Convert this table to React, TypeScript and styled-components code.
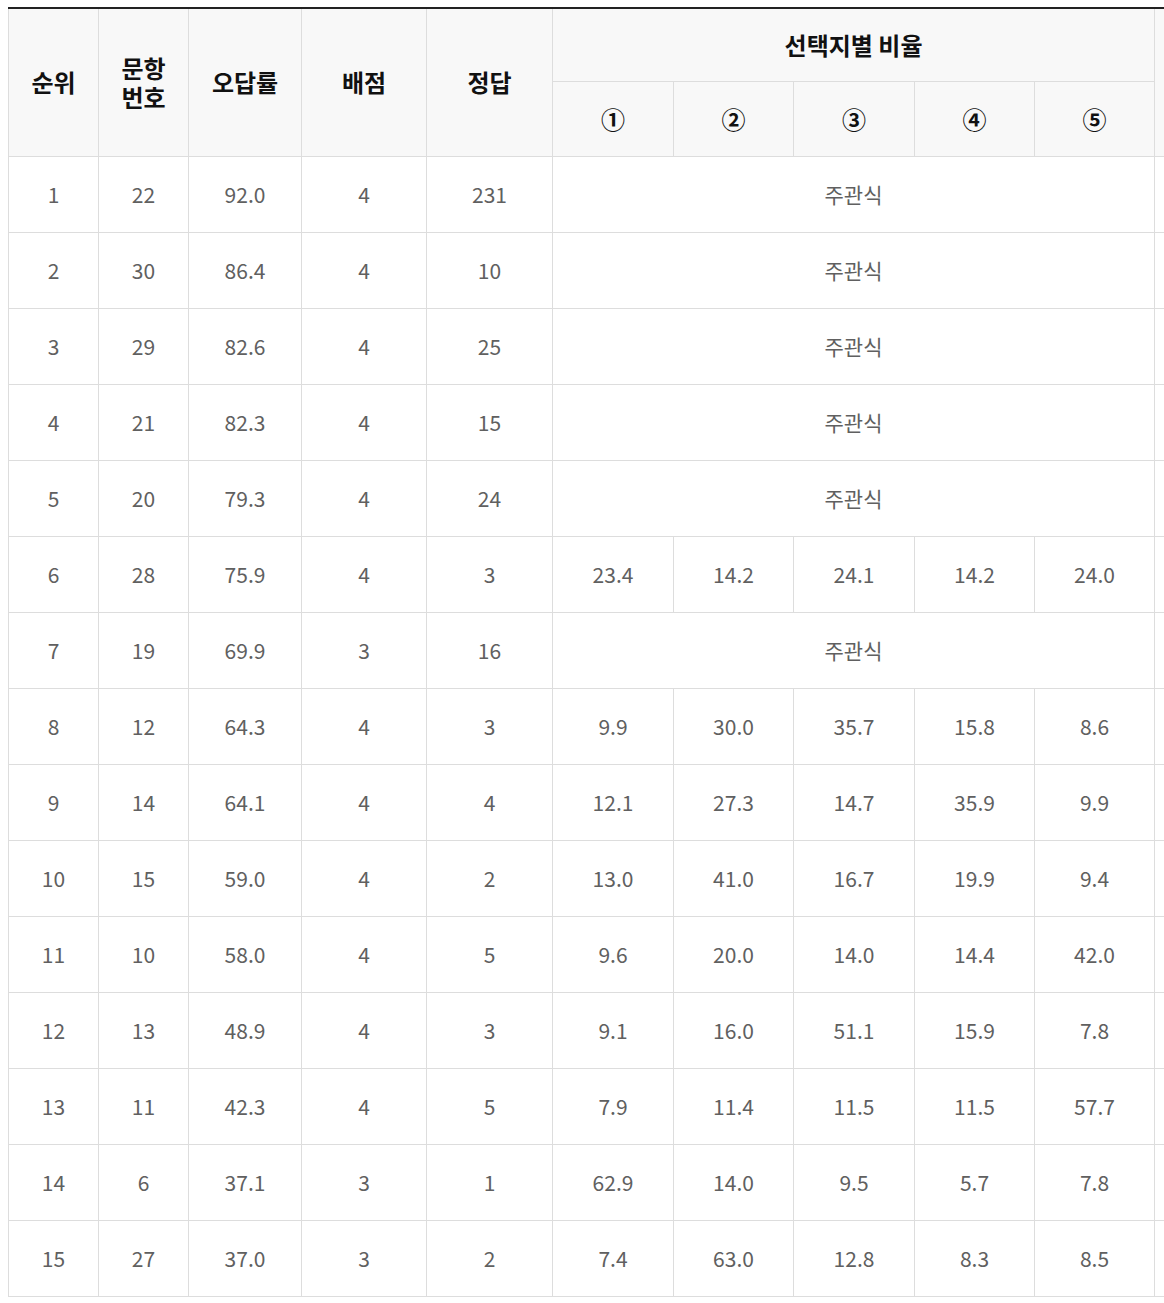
import React from "react";
import styled, { createGlobalStyle } from "styled-components";

const Global = createGlobalStyle`
  html, body { margin: 0; padding: 0; background: #fff; }
  body { font-family: "Noto Sans CJK KR", "Noto Sans", sans-serif; }
`;

const Page = styled.div`
  box-sizing: border-box;
  width: 100%;
  padding: 7px 0 0 8px;
  overflow: hidden;
`;

const Table = styled.table`
  border-collapse: collapse;
  table-layout: fixed;
  width: 1266px;
  border-top: 2px solid #222;
`;

const HeadCell = styled.th<{ $h?: number }>`
  background: #f8f8f8;
  border: 1px solid #ddd;
  border-top: none;
  color: #111;
  font-size: 24px;
  font-weight: 700;
  line-height: 29px;
  text-align: center;
  vertical-align: middle;
  padding: 0 0 2px;
  height: ${(p) => p.$h ?? 70}px;
`;

const Row = styled.tr`
  height: 76px;
`;

const Cell = styled.td`
  border: 1px solid #ddd;
  color: #606060;
  font-size: 21px;
  font-weight: 400;
  text-align: center;
  vertical-align: middle;
  padding: 0 0 2px;
`;

type R = { rank: number; no: number; rate: string; pt: number; ans: number; ratios?: string[] };

const rows: R[] = [
  { rank: 1, no: 22, rate: "92.0", pt: 4, ans: 231 },
  { rank: 2, no: 30, rate: "86.4", pt: 4, ans: 10 },
  { rank: 3, no: 29, rate: "82.6", pt: 4, ans: 25 },
  { rank: 4, no: 21, rate: "82.3", pt: 4, ans: 15 },
  { rank: 5, no: 20, rate: "79.3", pt: 4, ans: 24 },
  { rank: 6, no: 28, rate: "75.9", pt: 4, ans: 3, ratios: ["23.4", "14.2", "24.1", "14.2", "24.0"] },
  { rank: 7, no: 19, rate: "69.9", pt: 3, ans: 16 },
  { rank: 8, no: 12, rate: "64.3", pt: 4, ans: 3, ratios: ["9.9", "30.0", "35.7", "15.8", "8.6"] },
  { rank: 9, no: 14, rate: "64.1", pt: 4, ans: 4, ratios: ["12.1", "27.3", "14.7", "35.9", "9.9"] },
  { rank: 10, no: 15, rate: "59.0", pt: 4, ans: 2, ratios: ["13.0", "41.0", "16.7", "19.9", "9.4"] },
  { rank: 11, no: 10, rate: "58.0", pt: 4, ans: 5, ratios: ["9.6", "20.0", "14.0", "14.4", "42.0"] },
  { rank: 12, no: 13, rate: "48.9", pt: 4, ans: 3, ratios: ["9.1", "16.0", "51.1", "15.9", "7.8"] },
  { rank: 13, no: 11, rate: "42.3", pt: 4, ans: 5, ratios: ["7.9", "11.4", "11.5", "11.5", "57.7"] },
  { rank: 14, no: 6, rate: "37.1", pt: 3, ans: 1, ratios: ["62.9", "14.0", "9.5", "5.7", "7.8"] },
  { rank: 15, no: 27, rate: "37.0", pt: 3, ans: 2, ratios: ["7.4", "63.0", "12.8", "8.3", "8.5"] },
];

const widths = [90, 90, 113, 125, 126, 121, 120, 121, 120, 120, 120];
const circled = ["①", "②", "③", "④", "⑤"];

export default function App() {
  return (
    <Page>
      <Global />
      <Table>
        <colgroup>
          {widths.map((w, i) => (
            <col key={i} style={{ width: w }} />
          ))}
        </colgroup>
        <thead>
          <tr>
            <HeadCell rowSpan={2}>순위</HeadCell>
            <HeadCell rowSpan={2}>
              문항
              <br />
              번호
            </HeadCell>
            <HeadCell rowSpan={2}>오답률</HeadCell>
            <HeadCell rowSpan={2}>배점</HeadCell>
            <HeadCell rowSpan={2}>정답</HeadCell>
            <HeadCell colSpan={5}>선택지별 비율</HeadCell>
            <HeadCell rowSpan={2} />
          </tr>
          <tr>
            {circled.map((c) => (
              <HeadCell key={c} $h={72}>
                {c}
              </HeadCell>
            ))}
          </tr>
        </thead>
        <tbody>
          {rows.map((r) => (
            <Row key={r.rank}>
              <Cell>{r.rank}</Cell>
              <Cell>{r.no}</Cell>
              <Cell>{r.rate}</Cell>
              <Cell>{r.pt}</Cell>
              <Cell>{r.ans}</Cell>
              {r.ratios ? (
                r.ratios.map((v, i) => <Cell key={i}>{v}</Cell>)
              ) : (
                <Cell colSpan={5}>주관식</Cell>
              )}
              <Cell />
            </Row>
          ))}
        </tbody>
      </Table>
    </Page>
  );
}
